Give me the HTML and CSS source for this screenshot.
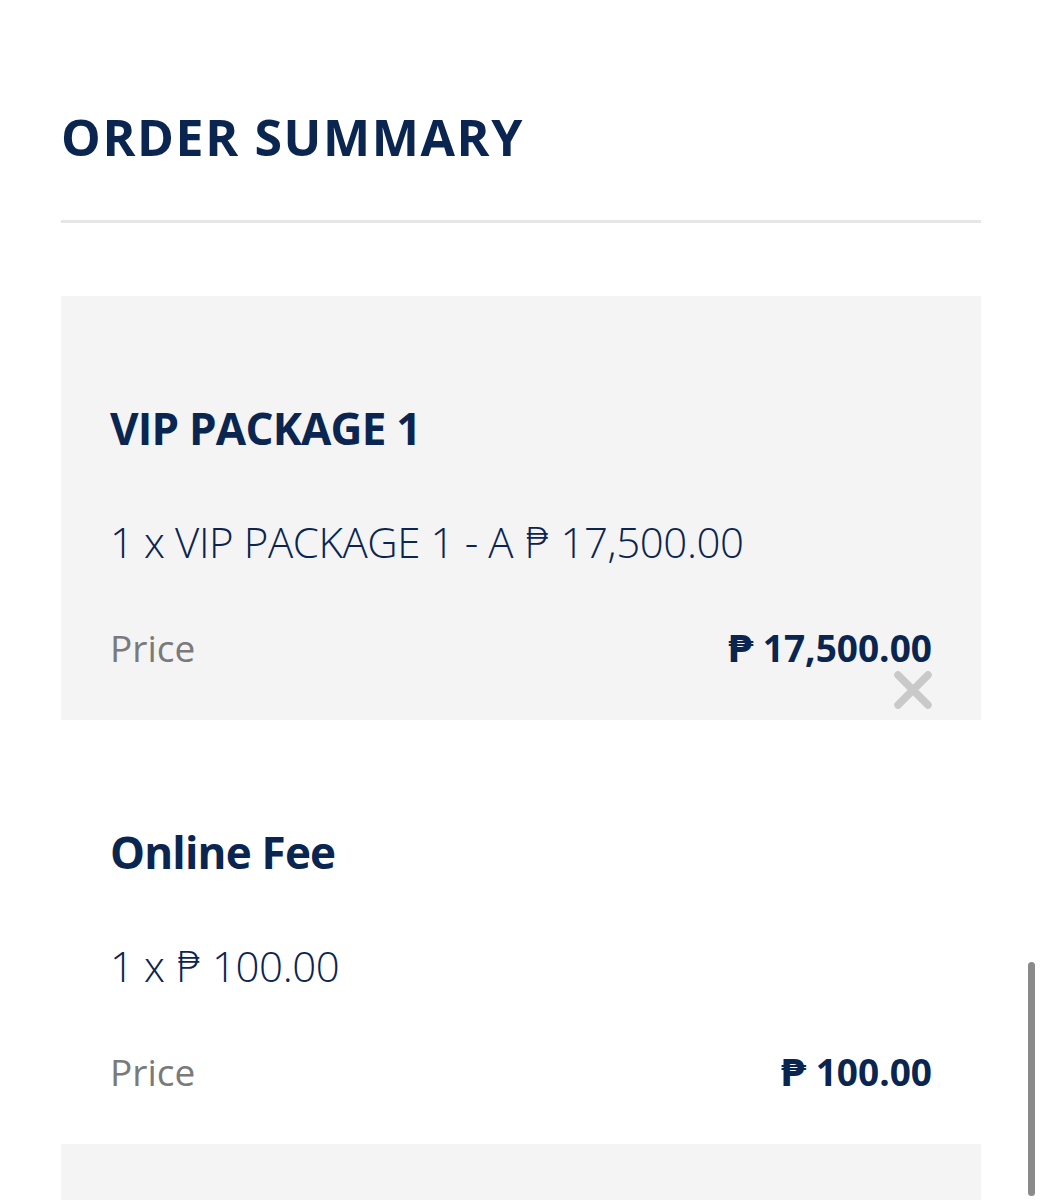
FILE: index.html
```html
<!DOCTYPE html>
<html lang="en">
<head>
<meta charset="utf-8">
<title>Order Summary</title>
<link rel="stylesheet" href="styles.css">
</head>
<body>
<main class="page">
  <h1 class="title">ORDER SUMMARY</h1>
  <hr class="divider">
  <section class="item item--shaded">
    <h2 class="item-name">VIP PACKAGE 1</h2>
    <p class="item-line">1 x VIP PACKAGE 1 - A ₱ 17,500.00</p>
    <div class="price-row">
      <span class="price-label">Price</span>
      <span class="price-value">₱ 17,500.00</span>
    </div>
    <button class="remove" aria-label="Remove">
      <svg viewBox="0 0 40 40" width="40" height="40"><path d="M5 5 L35 35 M35 5 L5 35" stroke="#c9c9c9" stroke-width="7.5" stroke-linecap="round" fill="none"/></svg>
    </button>
  </section>
  <section class="item">
    <h2 class="item-name">Online Fee</h2>
    <p class="item-line">1 x ₱ 100.00</p>
    <div class="price-row">
      <span class="price-label">Price</span>
      <span class="price-value">₱ 100.00</span>
    </div>
  </section>
  <section class="item item--shaded"></section>
</main>
<div class="scrollbar"></div>
</body>
</html>
```
FILE: styles.css
```css
html, body {
  margin: 0;
  padding: 0;
  background: #ffffff;
  height: 1200px;
  overflow: hidden;
}
body {
  font-family: "Open Sans", "DejaVu Sans", sans-serif;
  color: #0a2550;
}
.page {
  width: 920px;
  margin-left: 61px;
}
.title {
  margin: 0;
  padding-top: 107px;
  font-size: 50px;
  line-height: 60px;
  font-weight: 700;
  letter-spacing: 1.6px;
}
.divider {
  border: 0;
  height: 3px;
  background: #e6e6e6;
  margin: 53px 0 73px;
}
.item {
  position: relative;
  height: 424px;
  box-sizing: border-box;
  padding: 104px 49px 50px;
}
.item--shaded {
  background: #f4f4f4;
}
.item-name {
  margin: 0;
  font-size: 44px;
  line-height: 56px;
  font-weight: 700;
  letter-spacing: -0.8px;
}
.item-line {
  margin: 60px 0 0;
  font-size: 42px;
  line-height: 52px;
  font-weight: 300;
  letter-spacing: -0.4px;
}
.price-row {
  margin-top: 58px;
  display: flex;
  justify-content: space-between;
  font-size: 37px;
  line-height: 44px;
}
.price-label {
  color: #7a7a7a;
  font-weight: 400;
}
.price-value {
  font-weight: 700;
}
.remove {
  position: absolute;
  right: 47px;
  bottom: 9px;
  width: 42px;
  height: 42px;
  padding: 1px;
  border: 0;
  background: transparent;
}
.remove svg {
  display: block;
}
.scrollbar {
  position: fixed;
  left: 1028px;
  top: 962px;
  width: 7px;
  height: 234px;
  border-radius: 4px;
  background: #8a8a8a;
}
```
